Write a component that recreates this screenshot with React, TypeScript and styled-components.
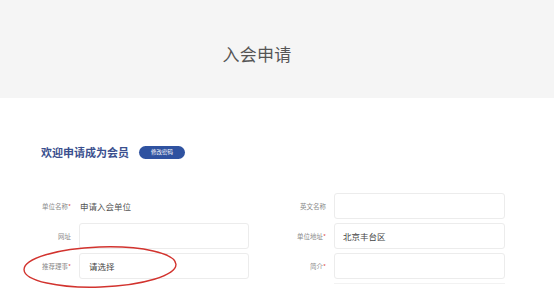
import { FC } from 'react';
import styled, { createGlobalStyle } from 'styled-components';

type FieldItem = {
  label: string;
  required?: boolean;
  value?: string;
  plain?: boolean;
};

const rows: [FieldItem, FieldItem][] = [
  [
    { label: '单位名称', required: true, value: '申请入会单位', plain: true },
    { label: '英文名称' },
  ],
  [
    { label: '网址' },
    { label: '单位地址', required: true, value: '北京丰台区' },
  ],
  [
    { label: '推荐理事', required: true, value: '请选择' },
    { label: '简介', required: true },
  ],
];

const Field: FC<{ item: FieldItem; wide?: boolean }> = ({ item, wide }) => (
  <>
    <Label>
      {item.label}
      {item.required && <Star>*</Star>}
    </Label>
    {item.plain ? (
      <PlainValue>{item.value}</PlainValue>
    ) : (
      <Input $wide={wide}>{item.value}</Input>
    )}
  </>
);

const App: FC = () => (
  <Root>
    <GlobalStyle />
    <Header>
      <Title>入会申请</Title>
    </Header>
    <Body>
      <Welcome>
        <WelcomeText>欢迎申请成为会员</WelcomeText>
        <Badge>修改密码</Badge>
      </Welcome>
      <Form>
        {rows.map(([left, right]) => (
          <Row key={left.label}>
            <Field item={left} />
            <Field item={right} wide />
          </Row>
        ))}
        <Divider />
        <Mark width="156" height="46" viewBox="0 0 156 46">
          <ellipse
            cx="78"
            cy="23"
            rx="76"
            ry="20"
            transform="rotate(-2 78 23)"
            fill="none"
            stroke="#d2332e"
            strokeWidth="1.4"
          />
        </Mark>
      </Form>
    </Body>
  </Root>
);

export default App;

const GlobalStyle = createGlobalStyle`
  html, body {
    margin: 0;
    padding: 0;
    background: #ffffff;
  }
  body {
    font-family: "Noto Sans CJK SC", "Noto Sans", sans-serif;
  }
`;

const Root = styled.div`
  width: 554px;
  height: 299px;
  overflow: hidden;
  background: #ffffff;
`;

const Header = styled.div`
  height: 98px;
  box-sizing: border-box;
  padding: 8px 40px 0 0;
  display: flex;
  align-items: center;
  justify-content: center;
  background: #f5f5f5;
`;

const Title = styled.div`
  font-size: 17px;
  color: #555555;
  letter-spacing: 0.3px;
`;

const Body = styled.div`
  padding-top: 45px;
`;

const Welcome = styled.div`
  display: flex;
  align-items: center;
  gap: 10px;
  padding-left: 41px;
  height: 18px;
`;

const WelcomeText = styled.div`
  font-size: 11px;
  font-weight: 700;
  color: #3a4f8e;
`;

const Badge = styled.div`
  width: 46px;
  height: 13px;
  border-radius: 7px;
  background: #2f52a0;
  color: #ffffff;
  font-size: 5.5px;
  display: flex;
  align-items: center;
  justify-content: center;
`;

const Form = styled.div`
  position: relative;
  margin-top: 32px;
  display: flex;
  flex-direction: column;
  gap: 4px;
`;

const Row = styled.div`
  display: grid;
  grid-template-columns: 75px 174px 81px 175px;
  align-items: center;
  height: 26px;
`;

const Label = styled.div`
  text-align: right;
  padding-right: 4px;
  font-size: 6.5px;
  color: #8a8a8a;
  white-space: nowrap;
`;

const Star = styled.span`
  color: #e0504a;
`;

const PlainValue = styled.div`
  padding-left: 5px;
  font-size: 8.5px;
  color: #555555;
`;

const Input = styled.div<{ $wide?: boolean }>`
  height: 26px;
  box-sizing: border-box;
  margin-left: 4px;
  border: 1px solid #ececec;
  border-radius: 3px;
  padding-left: ${({ $wide }) => ($wide ? 8 : 9)}px;
  display: flex;
  align-items: center;
  font-size: 8.5px;
  color: #444444;
`;

const Divider = styled.div`
  margin-left: 334px;
  width: 171px;
  height: 1px;
  background: #f2f2f2;
`;

const Mark = styled.svg`
  position: absolute;
  left: 22px;
  top: 51px;
`;
